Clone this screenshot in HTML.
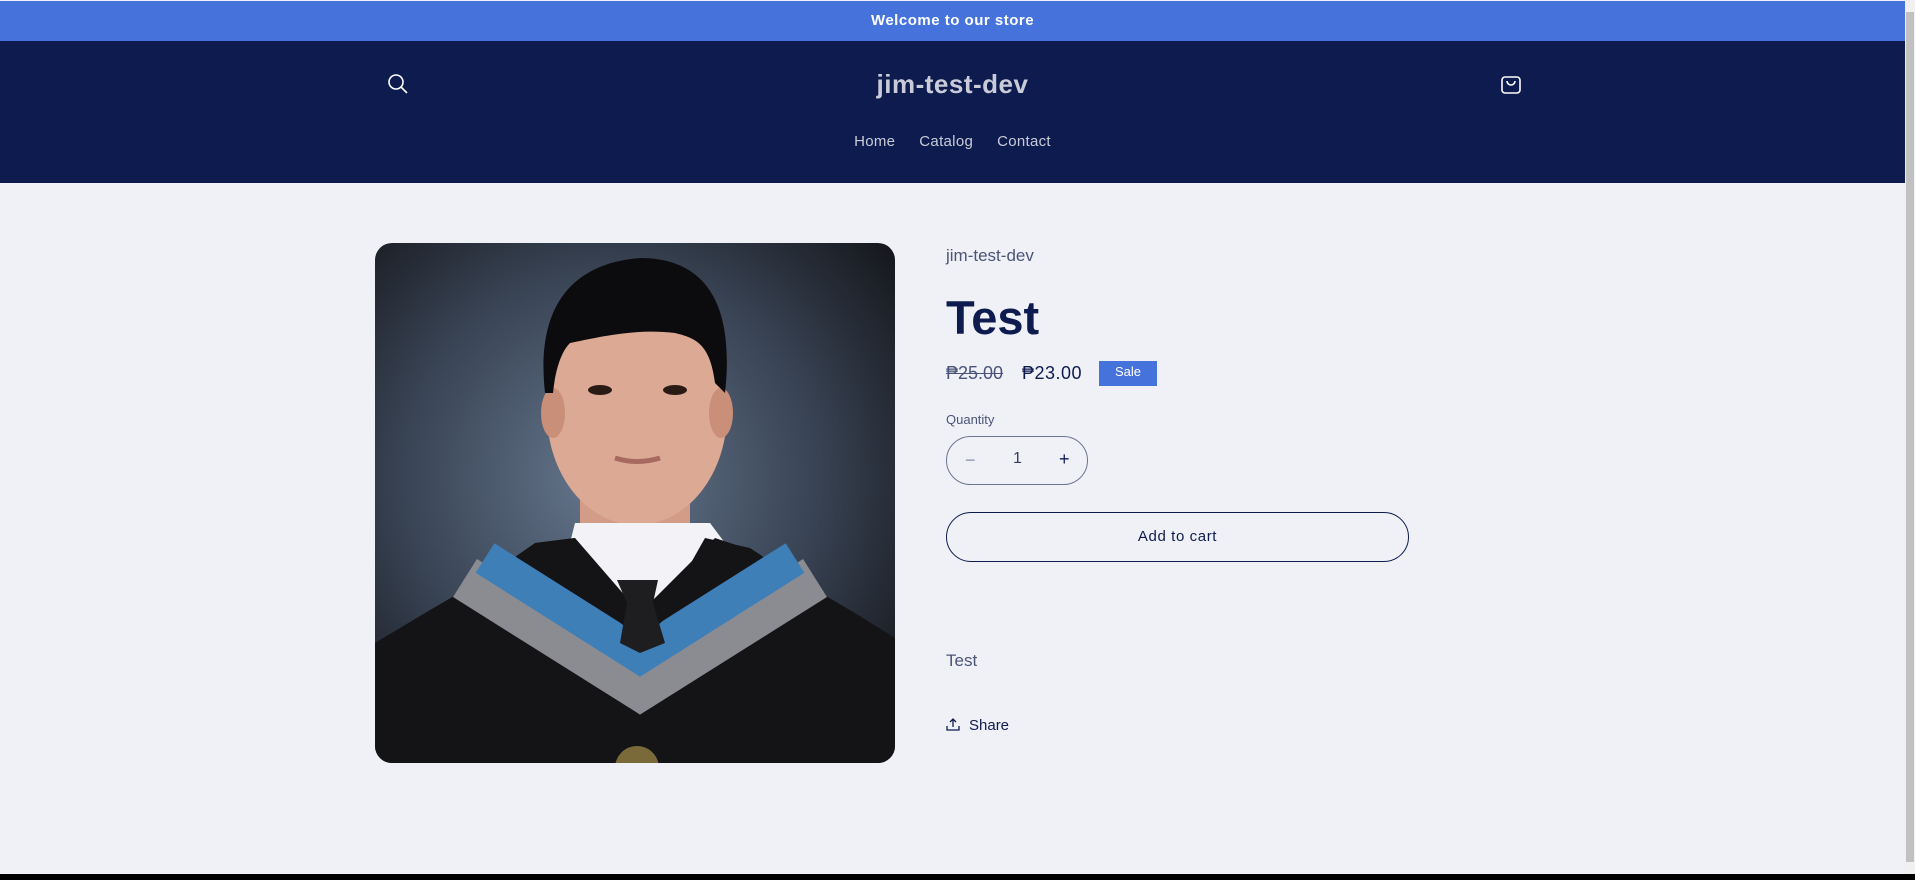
<!DOCTYPE html>
<html><head><meta charset="utf-8"><style>
*{margin:0;padding:0;box-sizing:border-box}
body{width:1915px;height:880px;overflow:hidden;background:#f0f1f6;font-family:"Liberation Sans",sans-serif;position:relative}
.ann{position:absolute;top:1px;left:0;width:1905px;height:40px;background:#4672dc;color:#fff;font-weight:bold;font-size:15px;text-align:center;line-height:40px;letter-spacing:.5px}
.hdr{position:absolute;top:41px;left:0;width:1905px;height:142px;background:#0d1b4f}
.logo{position:absolute;left:0;width:1905px;top:28px;text-align:center;color:#c9ccd8;font-weight:bold;font-size:26px;letter-spacing:.5px}
.nav{position:absolute;top:92px;left:0;width:1905px;text-align:center;color:#c9ccd8;font-size:15px;letter-spacing:.3px}
.nav span{margin:0 12px}
.sb{position:absolute;right:0;top:0;width:10px;height:874px;background:#f0f0f0}
.sb i{position:absolute;left:1px;top:12px;width:8px;height:850px;background:#c1c1c1}
.bot{position:absolute;left:0;bottom:0;width:1915px;height:6px;background:#000}
.img{position:absolute;left:375px;top:243px;width:520px;height:520px;border-radius:17px;overflow:hidden}
.c{position:absolute;left:946px;color:#0d1b4f}
.lab{color:#4a5478}
</style></head><body>
<div class="ann">Welcome to our store</div>
<div class="hdr">
<svg style="position:absolute;left:386px;top:31px" width="24" height="24" viewBox="0 0 24 24" fill="none" stroke="#fff" stroke-width="1.6"><circle cx="10" cy="10" r="7"/><path d="M15 15l6 6"/></svg>
<div class="logo">jim-test-dev</div>
<svg style="position:absolute;left:1499px;top:31px" width="24" height="24" viewBox="0 0 24 24" fill="none" stroke="#fff" stroke-width="1.6"><rect x="3" y="5" width="18" height="16" rx="3"/><path d="M8 9a4 4 0 0 0 8 0"/></svg>
<div class="nav"><span>Home</span><span>Catalog</span><span>Contact</span></div>
</div>
<div class="img"><svg width="520" height="520" viewBox="0 0 520 520">
<defs><radialGradient id="bg" cx="0.45" cy="0.45" r="0.7"><stop offset="0" stop-color="#67788f"/><stop offset="0.55" stop-color="#3a4556"/><stop offset="1" stop-color="#15171c"/></radialGradient></defs>
<rect width="520" height="520" fill="url(#bg)"/>
<rect x="205" y="200" width="110" height="100" fill="#d29c86"/>
<ellipse cx="262" cy="170" rx="90" ry="112" fill="#dca995"/>
<ellipse cx="178" cy="170" rx="12" ry="25" fill="#c98f78"/><ellipse cx="346" cy="170" rx="12" ry="25" fill="#c98f78"/>
<path d="M170 150 C160 60 200 20 265 15 C330 15 360 60 350 150 L340 140 C335 100 320 95 300 90 C260 85 220 95 195 100 C185 110 180 130 178 150Z" fill="#0c0c0e"/>
<ellipse cx="225" cy="147" rx="12" ry="5" fill="#2a1a14"/><ellipse cx="300" cy="147" rx="12" ry="5" fill="#2a1a14"/>
<path d="M240 215 Q262 222 285 215" stroke="#a86a60" stroke-width="5" fill="none"/>
<path d="M200 280 L335 280 L350 300 L330 340 L265 360 L205 330 L195 300Z" fill="#f3f3f7"/>
<path d="M0 400 L50 370 L110 335 L160 300 L200 295 L265 410 L330 295 L375 305 L420 335 L480 370 L520 395 L520 520 L0 520Z" fill="#141416"/>
<path d="M90 335 L265 445 L440 335" stroke="#8a8c92" stroke-width="45" fill="none"/>
<path d="M110 315 L265 413 L420 315" stroke="#3f7fb8" stroke-width="35" fill="none"/>
<path d="M160 300 L265 398 L370 305 L340 295 L265 370 L200 295Z" fill="#141416"/>
<path d="M242 337 L283 337 L278 360 L290 400 L265 410 L245 400 L252 360Z" fill="#1e1e21"/>
<circle cx="262" cy="525" r="22" fill="#7a6a3a"/>
</svg></div>
<div class="c lab" style="top:246px;font-size:17px">jim-test-dev</div>
<div class="c" style="top:290px;font-size:47px;font-weight:bold">Test</div>
<div class="c lab" style="top:363px;font-size:18px;text-decoration:line-through">₱25.00</div>
<div class="c" style="left:1022px;top:363px;font-size:18px;letter-spacing:.5px">₱23.00</div>
<div class="c" style="left:1099px;top:361px;width:58px;height:25px;background:#4672dc;color:#fff;font-size:13px;text-align:center;line-height:22px">Sale</div>
<div class="c lab" style="top:412px;font-size:13px">Quantity</div>
<div class="c" style="top:436px;width:142px;height:49px;border:1px solid #6e7590;border-radius:25px">
<span style="position:absolute;left:18px;top:13px;color:#8a90a8;font-size:18px">−</span>
<span style="position:absolute;left:66px;top:13px;font-size:16px;color:#333d60">1</span>
<span style="position:absolute;left:112px;top:12px;font-size:18px">+</span></div>
<div class="c" style="top:512px;width:463px;height:50px;border:1.5px solid #0d1b4f;border-radius:25px;text-align:center;line-height:47px;font-size:15px;letter-spacing:.6px">Add to cart</div>
<div class="c lab" style="top:651px;font-size:17px">Test</div>
<div class="c" style="top:717px;font-size:15px">
<svg width="14" height="14" viewBox="0 0 14 14" fill="none" stroke="#0d1b4f" stroke-width="1.3" style="vertical-align:-1px"><path d="M7 10V2M4 5l3-3 3 3M1 9v4h12V9"/></svg><span style="margin-left:9px">Share</span></div>
<div class="sb"><i></i></div>
<div class="bot"></div>
</body></html>
